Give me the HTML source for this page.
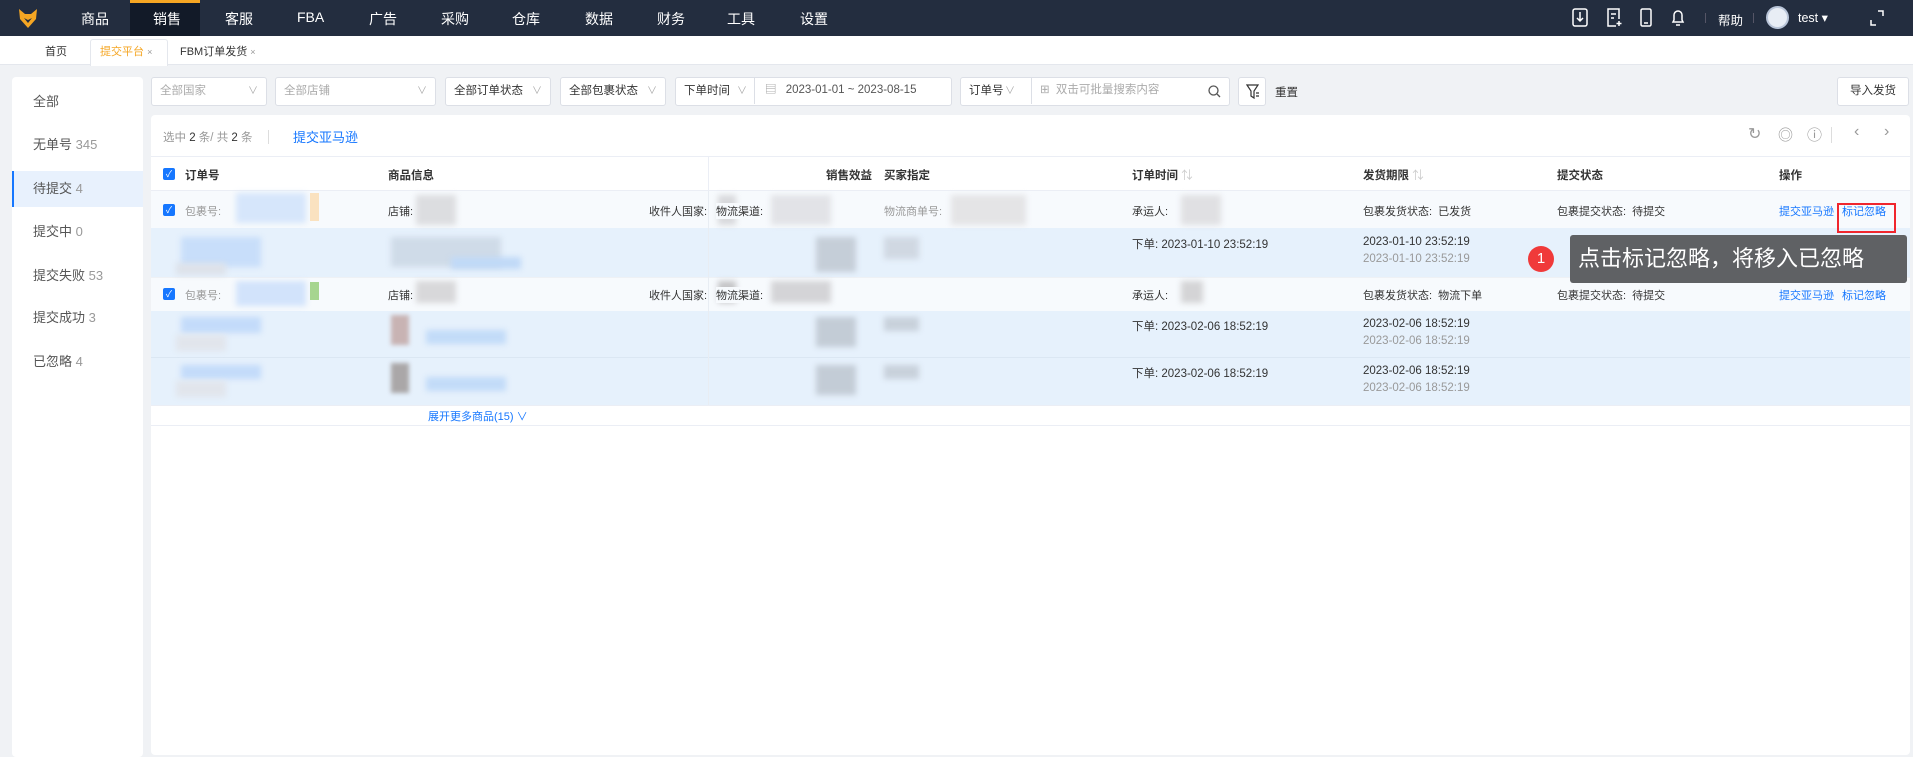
<!DOCTYPE html>
<html><head><meta charset="utf-8"><style>
*{box-sizing:border-box;margin:0;padding:0}
body{width:1913px;height:742px;overflow:hidden;background:#f0f2f5;font-family:"Liberation Sans","Noto Sans CJK SC",sans-serif;font-size:12px;color:#333;position:relative}
.a{position:absolute;white-space:nowrap}
.nav{left:0;top:0;width:1913px;height:36px;background:#232d3f}
.nav .m{color:#fff;font-size:14px;top:9px}
.tabs{left:0;top:36px;width:1913px;height:29px;background:#fff;border-bottom:1px solid #e4e7ed}
.side{left:12px;top:77px;width:131px;height:680px;background:#fff;border-radius:4px}
.side .i{left:0;width:131px;height:36px;line-height:36px;padding-left:21px;font-size:13px;color:#555}
.sel{height:29px;top:77px;background:#fff;border:1px solid #dcdfe6;border-radius:3px;line-height:27px;padding-left:8px;font-size:11.5px;color:#333}
.sel .v{position:absolute;right:8px;top:0;color:#aaa;font-size:10px}
.card{left:151px;top:115px;width:1759px;height:640px;background:#fff;border-radius:4px}
.cb{width:12px;height:12px;background:#1677ff;border-radius:2px;color:#fff;font-size:9px;line-height:12px;text-align:center}
.blur{position:absolute;filter:blur(3px)}
.lk{color:#1677ff}
.g{color:#999}
</style></head><body>
<div class="a nav">
 <svg class="a" style="left:17px;top:7px" width="22" height="22" viewBox="0 0 22 22"><path d="M2 2 L8 7 L14 7 L20 2 L19 12 L11 21 L3 12Z" fill="#f5a623"/><path d="M7 11 L11 16 L15 11 L11 13Z" fill="#232d3f"/></svg>
 <div class="a" style="left:130px;top:0;width:70px;height:36px;background:#121a28"></div>
 <div class="a" style="left:130px;top:0;width:70px;height:3px;background:#f5a623"></div>
 <span class="a m" style="left:81px">商品</span><span class="a m" style="left:153px">销售</span><span class="a m" style="left:225px">客服</span><span class="a m" style="left:297px">FBA</span><span class="a m" style="left:369px">广告</span><span class="a m" style="left:441px">采购</span><span class="a m" style="left:512px">仓库</span><span class="a m" style="left:585px">数据</span><span class="a m" style="left:657px">财务</span><span class="a m" style="left:727px">工具</span><span class="a m" style="left:800px">设置</span>
 <svg class="a" style="left:1572px;top:8px" width="16" height="19" fill="none" stroke="#fff" stroke-width="1.5"><rect x="1" y="1" width="14" height="17" rx="2"/><path d="M8 4v9M5 10l3 3 3-3"/></svg>
 <svg class="a" style="left:1606px;top:8px" width="16" height="19" fill="none" stroke="#fff" stroke-width="1.5"><path d="M10 18H2V1h11v10"/><path d="M5 6h5M5 10h3M13 13v5M10.5 15.5h5"/></svg>
 <svg class="a" style="left:1640px;top:8px" width="12" height="19" fill="none" stroke="#fff" stroke-width="1.5"><rect x="1" y="1" width="10" height="17" rx="1.5"/><path d="M4 15h4"/></svg>
 <svg class="a" style="left:1671px;top:8px" width="14" height="19" fill="none" stroke="#fff" stroke-width="1.5"><path d="M2 14h10l-1-2V7a4 4 0 0 0-8 0v5z M5 17h4"/></svg>
 <div class="a" style="left:1705px;top:13px;width:1px;height:10px;background:#556"></div>
 <span class="a" style="left:1718px;top:10px;color:#fff;font-size:12.5px">帮助</span>
 <div class="a" style="left:1753px;top:13px;width:1px;height:10px;background:#556"></div>
 <div class="a" style="left:1766px;top:6px;width:23px;height:23px;border-radius:50%;background:#e8edf5;border:2px solid #b8c4d8"></div>
 <span class="a" style="left:1798px;top:10px;color:#fff;font-size:12.5px">test ▾</span>
 <svg class="a" style="left:1870px;top:10px" width="14" height="16" fill="none" stroke="#fff" stroke-width="1.5"><path d="M8 1h5v5M1 10v5h5"/></svg>
</div>
<div class="a tabs">
 <span class="a" style="left:45px;top:7px;font-size:11px">首页</span>
 <div class="a" style="left:90px;top:3px;width:78px;height:27px;background:#fff;border:1px solid #e4e7ed;border-bottom:none;border-radius:3px 3px 0 0"></div>
 <span class="a" style="left:100px;top:7px;font-size:11px;color:#f5a623">提交平台 <span class="g" style="font-size:9px">×</span></span>
 <span class="a" style="left:180px;top:7px;font-size:11px">FBM订单发货 <span class="g" style="font-size:9px">×</span></span>
</div>
<div class="a side">
 <div class="a i" style="top:7px">全部</div>
 <div class="a i" style="top:50px">无单号 <span class="g">345</span></div>
 <div class="a i" style="top:94px;background:#e8f1fd;border-left:2px solid #1677ff;padding-left:19px">待提交 <span class="g">4</span></div>
 <div class="a i" style="top:137px">提交中 <span class="g">0</span></div>
 <div class="a i" style="top:181px">提交失败 <span class="g">53</span></div>
 <div class="a i" style="top:223px">提交成功 <span class="g">3</span></div>
 <div class="a i" style="top:267px">已忽略 <span class="g">4</span></div>
</div>
<div class="a sel" style="left:151px;width:116px;color:#aaa">全部国家<span class="v">∨</span></div>
<div class="a sel" style="left:275px;width:161px;color:#aaa">全部店铺<span class="v">∨</span></div>
<div class="a sel" style="left:445px;width:106px">全部订单状态<span class="v">∨</span></div>
<div class="a sel" style="left:560px;width:106px">全部包裹状态<span class="v">∨</span></div>
<div class="a sel" style="left:675px;width:277px">下单时间<span class="a" style="left:61px;top:0;color:#aaa;font-size:10px">∨</span><span class="a" style="left:78px;top:-1px;height:27px;border-left:1px solid #dcdfe6;padding-left:10px;color:#999">▤ <span style="color:#555;margin-left:6px">2023-01-01 ~ 2023-08-15</span></span></div>
<div class="a sel" style="left:960px;width:270px">订单号<span class="a" style="left:44px;top:0;color:#aaa;font-size:10px">∨</span><span class="a" style="left:70px;top:-1px;height:27px;border-left:1px solid #dcdfe6;padding-left:8px;color:#aaa">⊞ <span style="margin-left:3px">双击可批量搜索内容</span></span><svg class="a" style="right:8px;top:7px" width="13" height="13" fill="none" stroke="#555" stroke-width="1.3"><circle cx="5.5" cy="5.5" r="4.5"/><path d="M9 9l3 3"/></svg></div>
<div class="a sel" style="left:1238px;width:28px;padding:0"><svg class="a" style="left:7px;top:6px" width="14" height="15" fill="none" stroke="#333" stroke-width="1.2"><path d="M1 1h11L8 7v7L5 12V7z M10 9h3M10 12h3"/></svg></div>
<span class="a" style="left:1275px;top:84px;font-size:11.5px">重置</span>
<div class="a sel" style="left:1837px;width:72px;text-align:center;padding:0">导入发货</div>
<div class="a card">
 <span class="a g" style="left:12px;top:14px;font-size:11.5px">选中 <b style="color:#333;font-weight:normal">2</b> 条/ 共 <b style="color:#333;font-weight:normal">2</b> 条</span>
 <div class="a" style="left:117px;top:15px;width:1px;height:14px;background:#ddd"></div>
 <span class="a lk" style="left:142px;top:12px;font-size:13px">提交亚马逊</span>
 <span class="a g" style="left:1597px;top:9px;font-size:16px">↻</span>
 <span class="a g" style="left:1627px;top:9px;font-size:15px">◎</span>
 <span class="a g" style="left:1656px;top:9px;font-size:15px">ⓘ</span>
 <div class="a" style="left:1680px;top:12px;width:1px;height:16px;background:#ddd"></div>
 <span class="a g" style="left:1703px;top:8px;font-size:16px">‹</span>
 <span class="a g" style="left:1733px;top:8px;font-size:16px">›</span>
 <div class="a" style="left:0;top:41px;width:1759px;height:1px;background:#ebeef5"></div>
 <div class="a" style="left:557px;top:41px;width:1px;height:34px;background:#ebeef5"></div>
 <div class="a cb" style="left:12px;top:53px">✓</div>
 <b class="a" style="left:34px;top:52px;font-size:11.5px">订单号</b>
 <b class="a" style="left:237px;top:52px;font-size:11.5px">商品信息</b>
 <b class="a" style="left:675px;top:52px;font-size:11.5px">销售效益</b>
 <b class="a" style="left:733px;top:52px;font-size:11.5px">买家指定</b>
 <b class="a" style="left:981px;top:52px;font-size:11.5px">订单时间 <span style="color:#ccc;font-weight:normal">⇅</span></b>
 <b class="a" style="left:1212px;top:52px;font-size:11.5px">发货期限 <span style="color:#ccc;font-weight:normal">⇅</span></b>
 <b class="a" style="left:1406px;top:52px;font-size:11.5px">提交状态</b>
 <b class="a" style="left:1628px;top:52px;font-size:11.5px">操作</b>
 <div class="a" style="left:0;top:75px;width:1759px;height:1px;background:#ebeef5"></div>
 <div class="a" style="left:0;top:76px;width:1759px;height:37px;background:#f7fafd"></div>
 <div class="a" style="left:0;top:113px;width:1759px;height:49px;background:#e6f1fc"></div>
 <div class="a" style="left:0;top:162px;width:1759px;height:34px;background:#f7fafd;border-top:1px solid #eef1f5"></div>
 <div class="a" style="left:0;top:196px;width:1759px;height:94px;background:#e6f1fc"></div>
 <div class="a" style="left:0;top:242px;width:1759px;height:1px;background:#dbe7f3"></div>
 <div class="a" style="left:0;top:290px;width:1759px;height:1px;background:#ebeef5"></div>
 <div class="a" style="left:557px;top:76px;width:1px;height:214px;background:#e8edf3"></div>
 <div class="a cb" style="left:12px;top:89px">✓</div>
 <span class="a g" style="left:34px;top:88px;font-size:11px">包裹号:</span>
 <div class="blur" style="left:85px;top:78px;width:70px;height:30px;background:#d6e6fb"></div>
 <div class="a" style="left:159px;top:78px;width:9px;height:28px;background:#fae2c0"></div>
 <span class="a" style="left:237px;top:88px;font-size:11px">店铺:</span>
 <div class="blur" style="left:265px;top:80px;width:40px;height:30px;background:#dcdde0"></div>
 <span class="a" style="left:498px;top:88px;font-size:11px">收件人国家:</span>
 <div class="blur" style="left:567px;top:80px;width:18px;height:30px;background:#d8d9dc"></div>
 <span class="a" style="left:565px;top:88px;font-size:11px;background:#f7fafd">物流渠道:</span>
 <div class="blur" style="left:620px;top:80px;width:60px;height:30px;background:#e2e3e7"></div>
 <span class="a g" style="left:733px;top:88px;font-size:11px">物流商单号:</span>
 <div class="blur" style="left:800px;top:80px;width:75px;height:30px;background:#e4e4e6"></div>
 <span class="a" style="left:981px;top:88px;font-size:11px">承运人:</span>
 <div class="blur" style="left:1030px;top:80px;width:40px;height:30px;background:#e0e0e3"></div>
 <span class="a" style="left:1212px;top:88px;font-size:11px">包裹发货状态:&nbsp; 已发货</span>
 <span class="a" style="left:1406px;top:88px;font-size:11px">包裹提交状态:&nbsp; 待提交</span>
 <span class="a lk" style="left:1628px;top:88px;font-size:11px">提交亚马逊</span>
 <span class="a lk" style="left:1691px;top:88px;font-size:11px">标记忽略</span>
 <div class="blur" style="left:30px;top:122px;width:80px;height:30px;background:#c8defa"></div>
 <div class="blur" style="left:25px;top:148px;width:50px;height:12px;background:#dde2ea"></div>
 <div class="blur" style="left:240px;top:122px;width:110px;height:30px;background:#cfdbe8"></div>
 <div class="blur" style="left:300px;top:142px;width:70px;height:12px;background:#c0d9f7"></div>
 <div class="blur" style="left:665px;top:122px;width:40px;height:35px;background:#c5ced8"></div>
 <div class="blur" style="left:733px;top:122px;width:35px;height:22px;background:#d0d8e2"></div>
 <span class="a" style="left:981px;top:121px;font-size:11.5px">下单: 2023-01-10 23:52:19</span>
 <span class="a" style="left:1212px;top:121px;font-size:11.5px">2023-01-10 23:52:19</span>
 <span class="a g" style="left:1212px;top:138px;font-size:11.5px">2023-01-10 23:52:19</span>
 <div class="a cb" style="left:12px;top:173px">✓</div>
 <span class="a g" style="left:34px;top:172px;font-size:11px">包裹号:</span>
 <div class="blur" style="left:85px;top:166px;width:70px;height:25px;background:#d2e3fb"></div>
 <div class="a" style="left:159px;top:167px;width:9px;height:18px;background:#a6d58f"></div>
 <span class="a" style="left:237px;top:172px;font-size:11px">店铺:</span>
 <div class="blur" style="left:265px;top:166px;width:40px;height:22px;background:#d8d8da"></div>
 <span class="a" style="left:498px;top:172px;font-size:11px">收件人国家:</span>
 <div class="blur" style="left:567px;top:166px;width:18px;height:22px;background:#c4c4c6"></div>
 <span class="a" style="left:565px;top:172px;font-size:11px;background:#f7fafd">物流渠道:</span>
 <div class="blur" style="left:620px;top:166px;width:60px;height:22px;background:#d4d4d7"></div>
 <span class="a" style="left:981px;top:172px;font-size:11px">承运人:</span>
 <div class="blur" style="left:1030px;top:166px;width:22px;height:22px;background:#d4d4d6"></div>
 <span class="a" style="left:1212px;top:172px;font-size:11px">包裹发货状态:&nbsp; 物流下单</span>
 <span class="a" style="left:1406px;top:172px;font-size:11px">包裹提交状态:&nbsp; 待提交</span>
 <span class="a lk" style="left:1628px;top:172px;font-size:11px">提交亚马逊</span>
 <span class="a lk" style="left:1691px;top:172px;font-size:11px">标记忽略</span>
 <div class="blur" style="left:30px;top:202px;width:80px;height:16px;background:#c3dbfa"></div>
 <div class="blur" style="left:25px;top:220px;width:50px;height:16px;background:#e1e5ec"></div>
 <div class="a" style="left:240px;top:200px;width:18px;height:30px;background:#c8b3b3;filter:blur(2px)"></div>
 <div class="blur" style="left:275px;top:215px;width:80px;height:14px;background:#c2dbf8"></div>
 <div class="blur" style="left:665px;top:202px;width:40px;height:30px;background:#c3ccd6"></div>
 <div class="blur" style="left:733px;top:202px;width:35px;height:14px;background:#c8d1db"></div>
 <span class="a" style="left:981px;top:203px;font-size:11.5px">下单: 2023-02-06 18:52:19</span>
 <span class="a" style="left:1212px;top:203px;font-size:11.5px">2023-02-06 18:52:19</span>
 <span class="a g" style="left:1212px;top:220px;font-size:11.5px">2023-02-06 18:52:19</span>
 <div class="blur" style="left:30px;top:250px;width:80px;height:14px;background:#c3dbfa"></div>
 <div class="blur" style="left:25px;top:266px;width:50px;height:16px;background:#e1e5ec"></div>
 <div class="a" style="left:240px;top:248px;width:18px;height:30px;background:#aaa7a8;filter:blur(2px)"></div>
 <div class="blur" style="left:275px;top:262px;width:80px;height:14px;background:#c2dbf8"></div>
 <div class="blur" style="left:665px;top:250px;width:40px;height:30px;background:#c3ccd6"></div>
 <div class="blur" style="left:733px;top:250px;width:35px;height:14px;background:#c8d1db"></div>
 <span class="a" style="left:981px;top:250px;font-size:11.5px">下单: 2023-02-06 18:52:19</span>
 <span class="a" style="left:1212px;top:250px;font-size:11.5px">2023-02-06 18:52:19</span>
 <span class="a g" style="left:1212px;top:267px;font-size:11.5px">2023-02-06 18:52:19</span>
 <span class="a lk" style="left:277px;top:293px;font-size:11px">展开更多商品(15) ∨</span>
 <div class="a" style="left:0;top:310px;width:1759px;height:1px;background:#ebeef5"></div>
</div>
<div class="a" style="left:1837px;top:203px;width:59px;height:30px;border:2px solid #f0262d"></div>
<div class="a" style="left:1528px;top:246px;width:26px;height:26px;border-radius:50%;background:#f03a3a;color:#fff;font-size:15px;text-align:center;line-height:26px">1</div>
<div class="a" style="left:1564px;top:252px;width:0;height:0;border:7px solid transparent;border-right-color:#5f6164"></div>
<div class="a" style="left:1570px;top:235px;width:337px;height:48px;background:#5f6164;border-radius:3px;color:#fff;font-size:22px;line-height:48px;padding-left:8px">点击标记忽略，将移入已忽略</div>
</body></html>
